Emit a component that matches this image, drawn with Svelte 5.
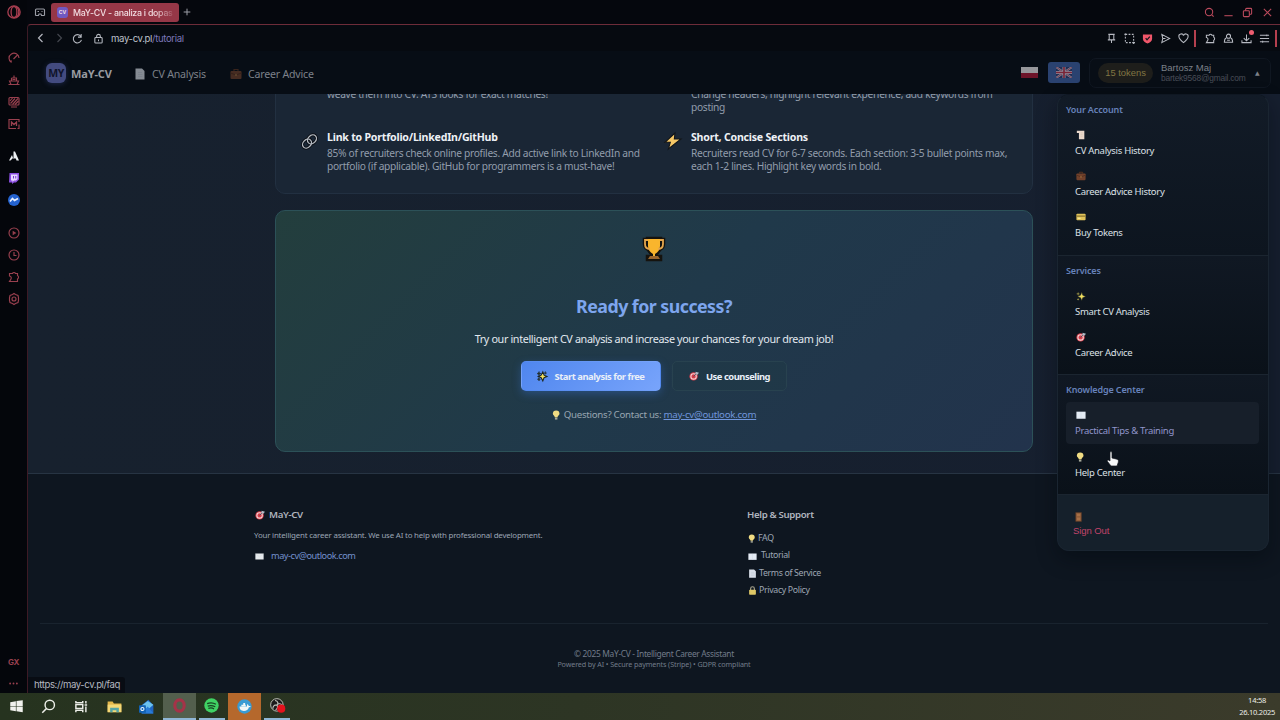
<script lang="ts">
  type MenuItem = { icon: string; label: string; active?: boolean };
  type MenuSection = { title: string; items: MenuItem[] };

  // All icons share a 24x24 grid and inherit currentColor for strokes.
  const ICONS: Record<string, string> = {
    opera: '<ellipse cx="12" cy="12" rx="10.5" ry="10.5"/><ellipse cx="12" cy="12" rx="5" ry="9.5"/><path d="M15 3c7 3 7 15 0 18" />',
    tabs: '<path d="M3 19V8a2 2 0 0 1 2-2h14a2 2 0 0 1 2 2v11M3 19h6l1-3h4l1 3h6M7 11h3M15 11h2"/>',
    plus: '<path d="M12 2v20M2 12h20" stroke-width="3"/>',
    search: '<circle cx="11" cy="11" r="8"/><path d="m17 17 4 4"/>',
    minimize: '<path d="M3 19h18"/>',
    restore: '<rect x="3" y="8" width="13" height="13" rx="2"/><path d="M8 8V5a2 2 0 0 1 2-2h9a2 2 0 0 1 2 2v9a2 2 0 0 1-2 2h-3"/>',
    close: '<path d="m4 4 16 16M20 4 4 20"/>',
    back: '<path d="m15 4-8 8 8 8"/>',
    forward: '<path d="m9 4 8 8-8 8"/>',
    reload: '<path d="M19 7a9 9 0 1 0 1.6 8M20 2v7h-7"/>',
    lock: '<rect x="4" y="10" width="16" height="12" rx="2"/><path d="M8 10V7a4 4 0 0 1 8 0v3M12 14v4"/>',
    pin: '<path d="M5 3h14M7 3v11M17 3v11M4 15h16M12 15v7"/>',
    snapshot: '<path d="M3 3h18v18H3z" stroke-dasharray="4 3"/><path d="M1 3h4M3 1v4M19 21h5M21 19v5"/>',
    shield: '<path d="M2 3h20v10c0 5-5 8-10 10-5-2-10-5-10-10z" fill="#f0566a" stroke="none"/><path d="m8 11 3 4 6-7" stroke="#10131b" stroke-width="2.6"/>',
    send: '<path d="M4 3l17 9-17 9 2-9zM6 12h6"/>',
    heart: '<path d="M12 21C5 15 2 12 2 8a5 5 0 0 1 10-2 5 5 0 0 1 10 2c0 4-3 7-10 13z"/>',
    puzzle: '<path d="M3 5h6a3.2 3.2 0 0 1 6 0h4v4a4 4 0 0 1 0 7v5H3l3-5a4 4 0 0 0-3-6z"/>',
    person: '<circle cx="12" cy="7" r="4.5"/><path d="M7 11c-3 1-4 3-4 9h18c0-6-1-8-4-9M9 16h6"/>',
    download: '<path d="M12 3v13M6 11l6 6 6-6M2 16v5h20v-5"/>',
    list: '<path d="M2 5h20M2 12h20M2 19h20M17 3v4M8 17v4"/>',
    gauge: '<path d="M7 21A10 10 0 1 1 22 12M11 14l8-8M4 18h4"/>',
    ship: '<path d="M7 8h10v6M7 8v6M12 3v5M3 14h18l-3 7H6zM9 11h6M1 21h22"/>',
    cleaner: '<rect x="2" y="3" width="20" height="15" rx="2"/><path d="M5 15 14 5M9 17 20 5M4 10l5-6M14 17l7-7M6 22h12"/>',
    mods: '<path d="M22 8V3H2v18h14M22 13v8h-3"/><path d="M7 16V8l5 5 5-5v8" stroke-width="2.6"/>',
    aria: '<path d="M11 3h3l8 18h-5c-1-5-3-6-6-3zM8 10l2 6-5 5H2z" fill="#eef0f4" stroke="none"/>',
    twitch: '<path d="M3 2h19v13l-6 6h-4l-4 3v-3H2z" fill="#8b4fe0" stroke="none"/><path d="M6 5h13v9l-3 3h-4l-3 3v-3H6z" fill="#e7d8ff" stroke="none"/><path d="M11 8v5M15.500 8v5" stroke="#7438cc" stroke-width="2"/>',
    messenger: '<circle cx="12" cy="12" r="12" fill="#2463d0" stroke="none"/><path d="m4 15 5-6 4 4 7-4" stroke="#e8f0ff" stroke-width="3.400"/>',
    player: '<circle cx="12" cy="12" r="10"/><path d="M10.500 9.500v5l4-2.500z" fill="currentColor"/>',
    clock: '<circle cx="12" cy="12" r="10"/><path d="M12 6v7h5"/>',
    gear: '<path d="M9 3l3-2 3 2 5 2 1 4v6l-1 4-5 2-3 2-3-2-5-2-1-4V9l1-4z"/><circle cx="12" cy="12" r="4"/>',
    doc: '<path d="M3 1h13l5 5v17H3z" fill="#d9dfe8" stroke="none"/><path d="M8 9h8M8 13h9M8 17h9" stroke="#b9c3d0" stroke-width="1"/>',
    scroll: '<path d="M2 2h18v20H7V7H2z" fill="#e9d8cb" stroke="none"/><path d="M11 7h5M11 11h5M11 15h5" stroke="#cdb9ab" stroke-width="1"/>',
    briefcase: '<path d="M8 6V3h8v3" stroke="#59331f"/><rect x="1" y="6" width="22" height="16" rx="2" fill="#71412b" stroke="none"/><path d="M1 10l11 4 11-4" stroke="#54301f"/><path d="M11 12h2v4h-2z" fill="#b98a4a" stroke="none"/>',
    card: '<rect x="1" y="4" width="22" height="16" rx="2" fill="#e0c35a" stroke="none"/><path d="M1 10h22" stroke="#8a7530" stroke-width="3"/><path d="M4 15h7" stroke="#fff2af"/>',
    sparkles: '<path d="m14 3 2 7 7 3-7 3-2 7-3-7-7-3 7-3z" fill="#f0df62" stroke="#20251d" stroke-width="1"/><path d="m5 2 1 4 4 1-4 1-1 4-1-4-4-1 4-1zM5 17l1 2 2 1-2 1-1 2-1-2-2-1 2-1z" fill="#b7ad4e" stroke="none"/>',
    sparklesDark: '<path d="m14 2 3 8 7 3-7 3-3 8-4-8-7-3 7-3z" fill="#f0df62" stroke="#1b2523" stroke-width="2.600"/><path d="m5 1 1 4 4 1-4 2-1 4-2-4-3-2 3-1zM4 16l2 2 2 2-2 1-1 3-2-3-2-1 2-2zM20 1l1 3 2 1-2 1-1 2-1-2-2-1 2-1z" fill="#27332b" stroke="#1b2523" stroke-width="1"/>',
    target: '<circle cx="11" cy="13" r="10" fill="#d73c48" stroke="none"/><circle cx="11" cy="13" r="6.500" fill="none" stroke="#f5d8da" stroke-width="2.500"/><circle cx="11" cy="13" r="2.500" fill="#d73c48" stroke="none"/><path d="M11 13 18 6" stroke="#44505f"/><path d="m15 8 1-6 4 1 4 1-4 5z" fill="#aebac5" stroke="none"/>',
    book: '<path d="M1 4h22v17H1z" fill="#e4ebf4" stroke="none"/><path d="M12 5v15" stroke="#ccd7e2" stroke-width="1"/>',
    mail: '<path d="M1 4h22v16H1z" fill="#e6eaed" stroke="none"/><path d="m2 5 10 8L22 5" stroke="#cfd6da" stroke-width="1"/>',
    bulb: '<path d="M10 1a8 8 0 0 0-8 8c0 4 5 5 5 9h6c0-4 5-5 5-9a8 8 0 0 0-8-8z" fill="#f0dc83" stroke="none"/><path d="M7 19h6v4H7z" fill="#a7a99a" stroke="none"/>',
    door: '<path d="M4 1h14v22H4z" fill="#8b5a39" stroke="#4d3123" stroke-width="1"/><path d="M7 4h8v6H7zM7 13h8v7H7z" fill="#a66f46" stroke="none"/>',
    padlock: '<path d="M7 11V7a5 5 0 0 1 10 0v4" stroke="#a9a58e" stroke-width="3"/><rect x="3" y="10" width="18" height="13" rx="2" fill="#dec766" stroke="none"/>',
    link: '<g stroke="#0d1118" stroke-width="4.500"><ellipse cx="8.500" cy="15" rx="7" ry="5.500" transform="rotate(-45 8.500 15)"/><ellipse cx="15.500" cy="9" rx="7" ry="5.500" transform="rotate(-45 15.500 9)"/></g><g stroke="#b4b9c0" stroke-width="1.900"><ellipse cx="8.500" cy="15" rx="7" ry="5.500" transform="rotate(-45 8.500 15)"/><ellipse cx="15.500" cy="9" rx="7" ry="5.500" transform="rotate(-45 15.500 9)"/></g>',
    bolt: '<path d="M15 0 0 14h8l-3 10 19-15h-10z" fill="#f5c766" stroke="#111419" stroke-width="1.600"/>',
    trophy: '<g stroke="#15130e" stroke-width="4.500" fill="#15130e"><path d="M6 2h12v7c0 4-2 6-5 8v3h5v2H6v-2h5v-3c-3-2-5-4-5-8z"/><path d="M6 3H3v4c0 3 2 5 5 5M18 3h3v4c0 3-2 5-5 5"/></g><path d="M6 2h12v7c0 4-2 6-5 8v3h-2v-3c-3-2-5-4-5-8z" fill="#f9b52d" stroke="none"/><path d="M6 3H3v4c0 3 2 5 5 5M18 3h3v4c0 3-2 5-5 5" stroke="#e4a64d" stroke-width="1.800"/><path d="M8 19h8l2 3H6z" fill="#9a662d" stroke="none"/>',
    windows: '<path d="m2 5 9-1.500V11H2zM12 3.300 22 2v9H12zM2 12h9v7.500L2 18zM12 12h10v9l-10-1.500z" fill="#f0f1ed" stroke="none"/>',
    find: '<circle cx="14" cy="9.500" r="7.500"/><path d="m9 15-7 7"/>',
    taskview: '<path d="M3 3v3h11V3M3 21v-3h11v3M3 9h11v6H3zM19 3v4M19 12v9M17 9.500h4"/>',
    explorer: '<path d="M1 4h8l2 3h12v14H1z" fill="#e4b84c" stroke="none"/><path d="M1 9h22v12H1z" fill="#f4d978" stroke="none"/><path d="M5 21v-7h14v7h-4v-3H9v3z" fill="#55a5a7" stroke="none"/>',
    outlook: '<path d="m4 10 11-9 8 9v13H4z" fill="#2065c2" stroke="none"/><path d="m5 10 9-7 9 6-10 9z" fill="#6bc2ed" stroke="none"/><path d="m4 23 10-11 9 11z" fill="#287cd8" stroke="none"/><rect x="0" y="10" width="11" height="12" rx="1" fill="#1262b3" stroke="none"/><circle cx="5.500" cy="16" r="2.500" stroke="#eef7ff" stroke-width="1.700"/>',
    operaRed: '<ellipse cx="12" cy="12" rx="7.500" ry="9" stroke="#a43348" stroke-width="5"/>',
    spotify: '<circle cx="12" cy="12" r="11.500" fill="#40d264" stroke="none"/><path d="M5 9c5-2 10-1.500 14 1M6 13c4-1.500 8-1 12 1M7 16.500c4-1 7-.5 9 1" stroke="#174322" stroke-width="2"/>',
    docker: '<circle cx="12" cy="12" r="11.500" fill="#399bd3" stroke="none"/><path d="M4 12h12c0-2 0-3 1-4l2 3 3 0c-1 2-2 2-3 2-1 4-4 6-8 6-5 0-7-3-7-7zM7 9h7v2.500H7zM10 6.500h3V9h-3z" fill="#f0f6f6" stroke="none"/>',
    obs: '<circle cx="11" cy="11" r="10" fill="#1c1b1c" stroke="#c4c6bf" stroke-width="1.500"/><path d="M8 4c5 1 6 5 3 7-5 0-7 3-6 6M11 11c3-3 7-2 9 1M11 11c2 3 1 6-2 8" stroke="#c0c0bb" stroke-width="1.800"/><circle cx="18" cy="17" r="6.500" fill="#e5121d" stroke="none"/>',
    more: '<g fill="currentColor" stroke="none"><circle cx="3" cy="12" r="2.500"/><circle cx="12" cy="12" r="2.500"/><circle cx="21" cy="12" r="2.500"/></g>',
  };

  const sidebarGroups = [
    ['gauge', 'ship', 'cleaner', 'mods'],
    ['aria', 'twitch', 'messenger'],
    ['player', 'clock', 'puzzle', 'gear'],
  ];

  const tips = [
    { icon: '', title: '', lines: ['weave them into CV. ATS looks for exact matches!'] },
    { icon: '', title: '', lines: ['Change headers, highlight relevant experience, add keywords from', 'posting'] },
    {
      icon: 'link',
      title: 'Link to Portfolio/LinkedIn/GitHub',
      lines: [
        '85% of recruiters check online profiles. Add active link to LinkedIn and',
        'portfolio (if applicable). GitHub for programmers is a must-have!',
      ],
    },
    {
      icon: 'bolt',
      title: 'Short, Concise Sections',
      lines: [
        'Recruiters read CV for 6-7 seconds. Each section: 3-5 bullet points max,',
        'each 1-2 lines. Highlight key words in bold.',
      ],
    },
  ];

  const menu: MenuSection[] = [
    {
      title: 'Your Account',
      items: [
        { icon: 'scroll', label: 'CV Analysis History' },
        { icon: 'briefcase', label: 'Career Advice History' },
        { icon: 'card', label: 'Buy Tokens' },
      ],
    },
    {
      title: 'Services',
      items: [
        { icon: 'sparkles', label: 'Smart CV Analysis' },
        { icon: 'target', label: 'Career Advice' },
      ],
    },
    {
      title: 'Knowledge Center',
      items: [
        { icon: 'book', label: 'Practical Tips & Training', active: true },
        { icon: 'bulb', label: 'Help Center' },
      ],
    },
  ];

  const supportLinks = [
    { icon: 'bulb', label: 'FAQ' },
    { icon: 'book', label: 'Tutorial' },
    { icon: 'doc', label: 'Terms of Service' },
    { icon: 'padlock', label: 'Privacy Policy' },
  ];

  const taskbar = [
    { icon: 'windows', state: '' },
    { icon: 'find', state: '' },
    { icon: 'taskview', state: '' },
    { icon: 'explorer', state: '' },
    { icon: 'outlook', state: '' },
    { icon: 'operaRed', state: 'focused' },
    { icon: 'spotify', state: 'running' },
    { icon: 'docker', state: 'alert' },
    { icon: 'obs', state: 'running' },
  ];

  let menuOpen = $state(true);
</script>

{#snippet icon(name: string, size = 12)}
  <svg class="icon" width={size} height={size} viewBox="0 0 24 24" aria-hidden="true">{@html ICONS[name]}</svg>
{/snippet}

<div class="desktop">
  <div class="browser">
    <aside class="sidebar">
      <div class="opera">{@render icon('opera', 14)}</div>
      {#each sidebarGroups as group}
        <div class="side-group">
          {#each group as name}
            <span class="side-icon">{@render icon(name, 12)}</span>
          {/each}
        </div>
      {/each}
      <div class="side-bottom">
        <span class="gx">GX</span>
        {@render icon('more', 9)}
      </div>
    </aside>

    <div class="window">
      <div class="tabbar">
        <span class="tab-menu">{@render icon('tabs', 12)}</span>
        <div class="tab">
          <span class="favicon">CV</span>
          <span class="tab-title">MaY-CV - analiza i dopas</span>
        </div>
        <span class="tab-plus">{@render icon('plus', 8)}</span>
        <div class="window-buttons">
          {#each ['search', 'minimize', 'restore', 'close'] as name}
            <span>{@render icon(name, 11)}</span>
          {/each}
        </div>
      </div>

      <div class="viewport">
        <div class="address">
          <span class="slot">{@render icon('back', 12)}</span>
          <span class="slot dim">{@render icon('forward', 12)}</span>
          <span class="slot">{@render icon('reload', 11)}</span>
          <span class="slot lock">{@render icon('lock', 11)}</span>
          <span class="url">may-cv.pl<i>/tutorial</i></span>
          <div class="tools">
            {#each ['pin', 'snapshot', 'shield', 'send', 'heart'] as name}
              <span class="slot">{@render icon(name, 11)}</span>
            {/each}
            <b class="bar"></b>
            {#each ['puzzle', 'person', 'download', 'list'] as name}
              <span class="slot" class:notify={name === 'download'}>{@render icon(name, 11)}</span>
            {/each}
            <b class="bar last"></b>
          </div>
        </div>

        <header class="app-header">
          <span class="logo">MY</span>
          <strong class="brand">MaY-CV</strong>
          <a class="nav nav-cv" href="#analysis">{@render icon('doc', 12)}<span>CV Analysis</span></a>
          <a class="nav nav-career" href="#advice">{@render icon('briefcase', 12)}<span>Career Advice</span></a>
          <div class="account">
            <span class="flag-pl"></span>
            <span class="flag-button">
              <svg width="16" height="11" viewBox="0 0 16 11" aria-hidden="true">
                <rect width="16" height="11" fill="#202c52" />
                <path d="M0 0 16 11M16 0 0 11" stroke="#85869a" stroke-width="2" />
                <path d="M0 0 16 11M16 0 0 11" stroke="#722c3e" stroke-width=".8" />
                <path d="M8 0v11M0 5.500h16" stroke="#8f8c9c" stroke-width="3" />
                <path d="M8 0v11M0 5.500h16" stroke="#7a2538" stroke-width="1.700" />
              </svg>
            </span>
            <button type="button" class="user" onclick={() => (menuOpen = !menuOpen)}>
              <span class="tokens">15 tokens</span>
              <span class="who"><b>Bartosz Maj</b><small>bartek9568@gmail.com</small></span>
              <span class="caret">▲</span>
            </button>
          </div>
        </header>

        <div class="page">
          <main>
            <section class="tips">
              {#each tips as tip}
                <article class="tip">
                  <span class="tip-icon">
                    {#if tip.icon}{@render icon(tip.icon, tip.icon === 'link' ? 17 : 16)}{/if}
                  </span>
                  <div>
                    {#if tip.title}<h3>{tip.title}</h3>{/if}
                    {#each tip.lines as line}<p>{line}</p>{/each}
                  </div>
                </article>
              {/each}
            </section>

            <section class="cta">
              <div class="trophy">{@render icon('trophy', 24)}</div>
              <h2>Ready for success?</h2>
              <p class="lead">Try our intelligent CV analysis and increase your chances for your dream job!</p>
              <div class="actions">
                <button type="button" class="btn primary">{@render icon('sparklesDark', 10)}<span>Start analysis for free</span></button>
                <button type="button" class="btn ghost">{@render icon('target', 10)}<span>Use counseling</span></button>
              </div>
              <p class="contact">{@render icon('bulb', 10)}<span>Questions? Contact us: <a href="#mail">may-cv@outlook.com</a></span></p>
            </section>
          </main>

          <footer>
            <div class="footer-cols">
              <div class="about">
                <h4>{@render icon('target', 10)}<span>MaY-CV</span></h4>
                <p>Your intelligent career assistant. We use AI to help with professional development.</p>
                <a href="#mail">{@render icon('mail', 9)}<span>may-cv@outlook.com</span></a>
              </div>
              <div class="support">
                <h4><span>Help &amp; Support</span></h4>
                {#each supportLinks as link}
                  <a href="#support" class={link.icon}>{@render icon(link.icon, 9)}<span>{link.label}</span></a>
                {/each}
              </div>
            </div>
            <div class="legal">
              <p>© 2025 MaY-CV - Intelligent Career Assistant</p>
              <small>Powered by AI • Secure payments (Stripe) • GDPR compliant</small>
            </div>
          </footer>

          <span class="status">https://may-cv.pl/faq</span>

          {#if menuOpen}
            <nav class="dropdown">
              {#each menu as section}
                <div class="menu-section">
                  <h5>{section.title}</h5>
                  {#each section.items as item}
                    <a class="menu-item" class:active={item.active} href="#menu">
                      {@render icon(item.icon, 10)}
                      <span>{item.label}</span>
                    </a>
                  {/each}
                </div>
              {/each}
              <a class="menu-item sign-out" href="#logout">
                {@render icon('door', 10)}
                <span>Sign Out</span>
              </a>
            </nav>
          {/if}
        </div>
      </div>
    </div>
  </div>

  <div class="taskbar">
    {#each taskbar as app}
      <span class="task {app.state}">{@render icon(app.icon, 15)}</span>
    {/each}
    <div class="datetime"><span>14:58</span><span>26.10.2025</span></div>
  </div>

  <svg class="cursor" width="12" height="17" viewBox="0 0 12 17" aria-hidden="true">
    <path d="M3 2c0-2 2-2 2 0v5l5 1.200c1.500.5 1.500 1.500 1.300 3L10 15H4L.5 10.500c-.8-1.500.8-2 2.500-.5z" fill="#f6f7f8" stroke="#16191f" stroke-width=".7" />
  </svg>
</div>

<style>
  :global(body) {
    background: #05080e;
  }

  .desktop {
    position: relative;
    width: 1280px;
    height: 720px;
    display: flex;
    flex-direction: column;
    overflow: hidden;
    font-family: "Noto Sans", "Open Sans", sans-serif;
    color: #e3e7ee;
  }

  h2, h3, h4, h5, p {
    margin: 0;
  }

  a {
    color: inherit;
    text-decoration: none;
  }

  button {
    font: inherit;
    color: inherit;
  }

  span, p, h2, h3, h4, h5, small, b {
    white-space: nowrap;
  }

  .icon {
    display: block;
    flex: none;
    fill: none;
    stroke: currentColor;
    stroke-width: 2.3;
    overflow: visible;
  }

  .browser {
    height: 693px;
    display: flex;
    background: #05070d;
  }

  /* Browser sidebar */
  .sidebar {
    width: 27px;
    display: flex;
    flex-direction: column;
    align-items: center;
    color: #99404f;
    background: #04060b;
  }

  .opera {
    margin: 5px 0 27.5px;
    color: #a63e50;
  }

  .side-group {
    display: flex;
    flex-direction: column;
    margin-bottom: 10.5px;
  }

  .side-icon {
    height: 22px;
    display: flex;
    align-items: center;
  }

  .side-bottom {
    margin-top: auto;
    padding-bottom: 5px;
    display: flex;
    flex-direction: column;
    align-items: center;
    gap: 11px;
  }

  .gx {
    font: bold 8px/12px Inter, sans-serif;
    letter-spacing: -0.4px;
  }

  .window {
    flex: 1;
    min-width: 0;
    display: flex;
    flex-direction: column;
  }

  .tabbar {
    height: 24px;
    display: flex;
    align-items: center;
    padding-left: 7px;
    font-family: Inter, sans-serif;
    color: #9b9da6;
  }

  .tab {
    width: 128px;
    height: 19px;
    margin-left: 5px;
    padding-left: 6px;
    box-sizing: border-box;
    display: flex;
    align-items: center;
    gap: 5px;
    border-radius: 3px;
    background: #963747;
    color: #f1dce1;
  }

  .favicon {
    width: 11px;
    flex: none;
    font-size: 5px;
    line-height: 11px;
    font-weight: 700;
    text-align: center;
    border-radius: 3px;
    background: #7059c2;
  }

  .tab-title {
    font-size: 8.8px;
    font-weight: 500;
    letter-spacing: -0.26px;
    mask-image: linear-gradient(90deg, #000 82%, rgb(0 0 0 / 15%));
  }

  .tab-plus {
    margin-left: 4px;
  }

  .window-buttons {
    margin-left: auto;
    margin-right: 3px;
    display: flex;
    color: #bc4b5d;
  }

  .window-buttons span {
    width: 19.4px;
    display: grid;
    place-items: center;
  }

  .viewport {
    flex: 1;
    display: flex;
    flex-direction: column;
    border-top: 1px solid #6d2c39;
    border-left: 1px solid #3d1a25;
    border-top-left-radius: 4px;
    background: #060a10;
    overflow: hidden;
  }

  .address {
    height: 26px;
    display: flex;
    align-items: center;
    padding: 0 0 0 4px;
    color: #b6b9c1;
    font-family: Inter, sans-serif;
  }

  .slot {
    width: 18px;
    display: flex;
    justify-content: center;
    position: relative;
  }

  .slot.dim {
    color: #44474f;
  }

  .slot.lock {
    margin-left: 3px;
  }

  .url {
    margin-left: 4px;
    font-size: 9.6px;
    letter-spacing: -0.36px;
    color: #bec1cb;
  }

  .url i {
    font-style: normal;
    color: #7c76b8;
  }

  .tools {
    margin-left: auto;
    display: flex;
    align-items: center;
  }

  .bar {
    width: 2px;
    height: 17px;
    margin: 0 5px 0 2px;
    background: #b5404f;
  }

  .bar.last {
    margin: 0 3px 0 2px;
  }

  .notify::after {
    content: "";
    position: absolute;
    top: -3px;
    right: 1px;
    width: 5px;
    height: 5px;
    border-radius: 50%;
    background: #ee5d70;
  }

  .app-header {
    height: 43px;
    flex: none;
    display: flex;
    align-items: center;
    padding-left: 18px;
    background: #070d15;
    color: #7d8189;
  }

  .logo {
    width: 20px;
    font-size: 10.5px;
    line-height: 20px;
    font-weight: 700;
    text-align: center;
    letter-spacing: -0.5px;
    color: #10142b;
    border-radius: 6px;
    background: #434b80;
    box-shadow: 0 1px 5px #1d2748;
  }

  .brand {
    margin-left: 5px;
    padding-top: 1px;
    width: 42px;
    font-size: 11px;
    letter-spacing: -0.15px;
    color: #989ba1;
  }

  .nav {
    display: flex;
    align-items: center;
    gap: 5px;
    padding-top: 2px;
    font-size: 10.6px;
    letter-spacing: -0.2px;
  }

  .nav .icon {
    opacity: 0.6;
  }

  .nav-cv {
    margin-left: 21px;
    width: 71px;
  }

  .nav-cv span {
    padding-left: 1px;
  }

  .nav-career {
    margin-left: 25px;
    gap: 6px;
  }

  .account {
    margin-left: auto;
    margin-right: 9px;
    display: flex;
    align-items: center;
  }

  .flag-pl {
    width: 17px;
    height: 11px;
    background: linear-gradient(#96979b 50%, #6d1429 50%);
  }

  .flag-button {
    width: 32px;
    height: 21px;
    margin-left: 10px;
    display: grid;
    place-items: center;
    border-radius: 3px;
    background: #2a4270;
  }

  .user {
    width: 182px;
    height: 30px;
    margin-left: 9px;
    padding: 0 8px;
    box-sizing: border-box;
    display: flex;
    align-items: center;
    text-align: left;
    border: 1px solid #101721;
    border-radius: 7px;
    background: #080e16;
    font-family: "Liberation Sans", Arial, sans-serif;
  }

  .tokens {
    width: 55px;
    font-size: 9.4px;
    line-height: 20px;
    text-align: center;
    color: #817643;
    border-radius: 10px;
    background: #1e1e1b;
  }

  .who {
    margin-left: 8px;
    width: 85px;
    display: flex;
    flex-direction: column;
    color: #7c8088;
  }

  .who b {
    font-size: 9.5px;
    line-height: 11px;
    font-weight: 400;
  }

  .who small {
    font-size: 8.4px;
    line-height: 10px;
    letter-spacing: -0.2px;
    color: #484d57;
  }

  .caret {
    margin-left: 9px;
    font: 6px "DejaVu Sans", sans-serif;
  }

  /* Page content, scrolled so that its end touches the window bottom */
  .page {
    position: relative;
    flex: 1;
    min-height: 0;
    display: flex;
    flex-direction: column;
    background: linear-gradient(90deg, #17212e, #161f2f);
  }

  main {
    height: 379px;
    padding-bottom: 21px;
    box-sizing: border-box;
    display: flex;
    flex-direction: column;
    justify-content: flex-end;
    align-items: center;
    gap: 16.5px;
    overflow: hidden;
  }

  .tips {
    width: 758px;
    padding: 20px 25px 19px 24px;
    box-sizing: border-box;
    display: grid;
    grid-template-columns: 344px 344px;
    gap: 14px 20px;
    border: 1px solid #223041;
    border-radius: 10px;
    background: #1a2635;
  }

  .tip {
    display: flex;
  }

  .tip-icon {
    width: 18px;
    margin-right: 9px;
    padding-top: 4px;
    flex: none;
    display: flex;
    justify-content: center;
    align-items: flex-start;
  }

  .tip h3 {
    height: 18px;
    font-size: 10.6px;
    line-height: 16px;
    font-weight: 700;
    letter-spacing: -0.22px;
    color: #eef1f6;
  }

  .tip p {
    font-size: 10.2px;
    line-height: 13.5px;
    letter-spacing: -0.3px;
    color: #929dac;
  }

  .cta {
    width: 758px;
    height: 242px;
    flex: none;
    padding-top: 23px;
    box-sizing: border-box;
    display: flex;
    flex-direction: column;
    align-items: center;
    border: 1px solid #2c5158;
    border-radius: 10px;
    background: linear-gradient(135deg, #233e3d, #20394a 50%, #22334c);
  }

  .trophy {
    height: 30px;
    display: grid;
    place-items: center;
  }

  .cta h2 {
    margin-top: 28px;
    font-size: 17.8px;
    line-height: 28px;
    letter-spacing: -0.53px;
    color: #7da5ed;
  }

  .lead {
    margin-top: 10px;
    font-size: 10.8px;
    line-height: 18px;
    letter-spacing: -0.37px;
    color: #e2e8ef;
  }

  .actions {
    margin-top: 13px;
    display: flex;
    gap: 11px;
  }

  .btn {
    height: 30px;
    padding: 0;
    display: flex;
    align-items: center;
    justify-content: center;
    gap: 7px;
    border: 1px solid transparent;
    border-radius: 5px;
    font-size: 9.4px;
    font-weight: 700;
    letter-spacing: -0.46px;
    color: #e9eff8;
  }

  .primary {
    width: 140px;
    background: linear-gradient(135deg, #4f86ee, #78a4fb);
    box-shadow: 0 3px 9px rgb(56 112 205 / 40%);
  }

  .ghost {
    width: 115px;
    border-color: #28424f;
    background: #20384699;
  }

  .contact {
    margin-top: 16px;
    display: flex;
    align-items: center;
    gap: 2px;
    font-size: 9.7px;
    line-height: 16px;
    letter-spacing: -0.28px;
    color: #98a6b1;
  }

  .contact a {
    color: #7096db;
    text-decoration: underline;
  }

  footer {
    flex: 1;
    padding: 0 12px;
    border-top: 1px solid #273443;
    background: #0e1620;
  }

  .footer-cols {
    width: 800px;
    height: 149px;
    margin: 0 auto;
    padding-top: 32px;
    box-sizing: border-box;
    display: grid;
    grid-template-columns: 493px 1fr;
  }

  footer h4 {
    display: flex;
    align-items: center;
    gap: 4px;
    font-size: 9.7px;
    line-height: 18px;
    font-weight: 600;
    letter-spacing: -0.36px;
    color: #aeb4be;
  }

  .about a, .support a {
    display: flex;
    align-items: center;
  }

  .about h4 {
    padding-left: 1px;
  }

  .about p {
    margin-top: 5px;
    font-size: 7.9px;
    line-height: 13px;
    letter-spacing: -0.19px;
    color: #9ba5b4;
  }

  .about a {
    margin-top: 6px;
    padding-left: 1px;
    gap: 7px;
    font-size: 9.2px;
    line-height: 16px;
    letter-spacing: -0.46px;
    color: #7390cd;
  }

  .support h4 {
    margin-bottom: 6px;
  }

  .support a {
    gap: 2px;
    padding-left: 1px;
    font-size: 8.8px;
    line-height: 17.4px;
    letter-spacing: -0.35px;
    color: #9ea7b4;
  }

  .support a.bulb {
    gap: 1px;
  }

  .support a.book {
    gap: 4px;
  }

  .legal {
    padding-top: 24px;
    display: flex;
    flex-direction: column;
    align-items: center;
    border-top: 1px solid #19232e;
    color: #727c8a;
  }

  .legal p {
    font-size: 8.4px;
    line-height: 12px;
    letter-spacing: -0.32px;
  }

  .legal small {
    font-size: 7.2px;
    line-height: 9px;
    letter-spacing: -0.12px;
  }

  .status {
    position: absolute;
    left: 0;
    bottom: 0;
    padding: 0 5px 1px 6px;
    font: 9.6px/15px Inter, sans-serif;
    letter-spacing: -0.42px;
    color: #b4b8c0;
    background: #080c13;
    border-top-right-radius: 3px;
  }

  /* Account menu */
  .dropdown {
    position: absolute;
    top: 0;
    right: 11px;
    width: 212px;
    height: 457px;
    box-sizing: border-box;
    border: 1px solid #1a2531;
    border-top-color: #0f1722;
    border-radius: 12px;
    background: #15202b;
    box-shadow: 0 8px 20px rgb(3 7 13 / 40%);
    overflow: hidden;
  }

  .menu-section {
    box-sizing: border-box;
    padding: 7px 9px 9.4px 8px;
    border-bottom: 1px solid #1b2530;
    background: linear-gradient(#101823, #0a1119);
  }

  .menu-section:first-child {
    padding-bottom: 9px;
    background: linear-gradient(#121b27, #0d151f);
  }

  .menu-section h5 {
    height: 20px;
    font-size: 9px;
    line-height: 15px;
    font-weight: 600;
    letter-spacing: -0.13px;
    color: #6782ba;
  }

  .menu-item {
    height: 41.2px;
    padding: 8px 0 0 9px;
    box-sizing: border-box;
    display: flex;
    flex-direction: column;
    gap: 3px;
    border-radius: 4px;
    font-size: 9.5px;
    line-height: 15px;
    letter-spacing: -0.3px;
    color: #dce0e6;
  }

  .menu-item .icon {
    margin-left: 1px;
  }

  .menu-item.active {
    color: #9296cc;
    background: #171f2a;
  }

  .menu-item.sign-out {
    padding: 17px 0 0 15px;
    font-family: "Liberation Sans", Arial, sans-serif;
    letter-spacing: -0.1px;
    color: #c1446a;
    gap: 1px;
  }

  /* Windows taskbar */
  .taskbar {
    height: 27px;
    display: flex;
    background: linear-gradient(90deg, #26331f, #2d3524 45%, #3b3b2b);
    color: #eceee8;
  }

  .task {
    width: 32.6px;
    display: grid;
    place-items: center;
  }

  .task.focused {
    background: #535f4d;
    border-bottom: 2px solid #8fb6d5;
  }

  .task.running {
    border-bottom: 2px solid #8fb6d5;
    margin: 0 3px;
    width: 26.6px;
  }

  .task.alert {
    background: #b5682c;
  }

  .datetime {
    margin-left: auto;
    padding: 1px 5px 0 0;
    display: flex;
    flex-direction: column;
    align-items: center;
    font-size: 7.5px;
    line-height: 12px;
    letter-spacing: -0.25px;
  }

  .cursor {
    position: absolute;
    left: 1107px;
    top: 451px;
  }
</style>
